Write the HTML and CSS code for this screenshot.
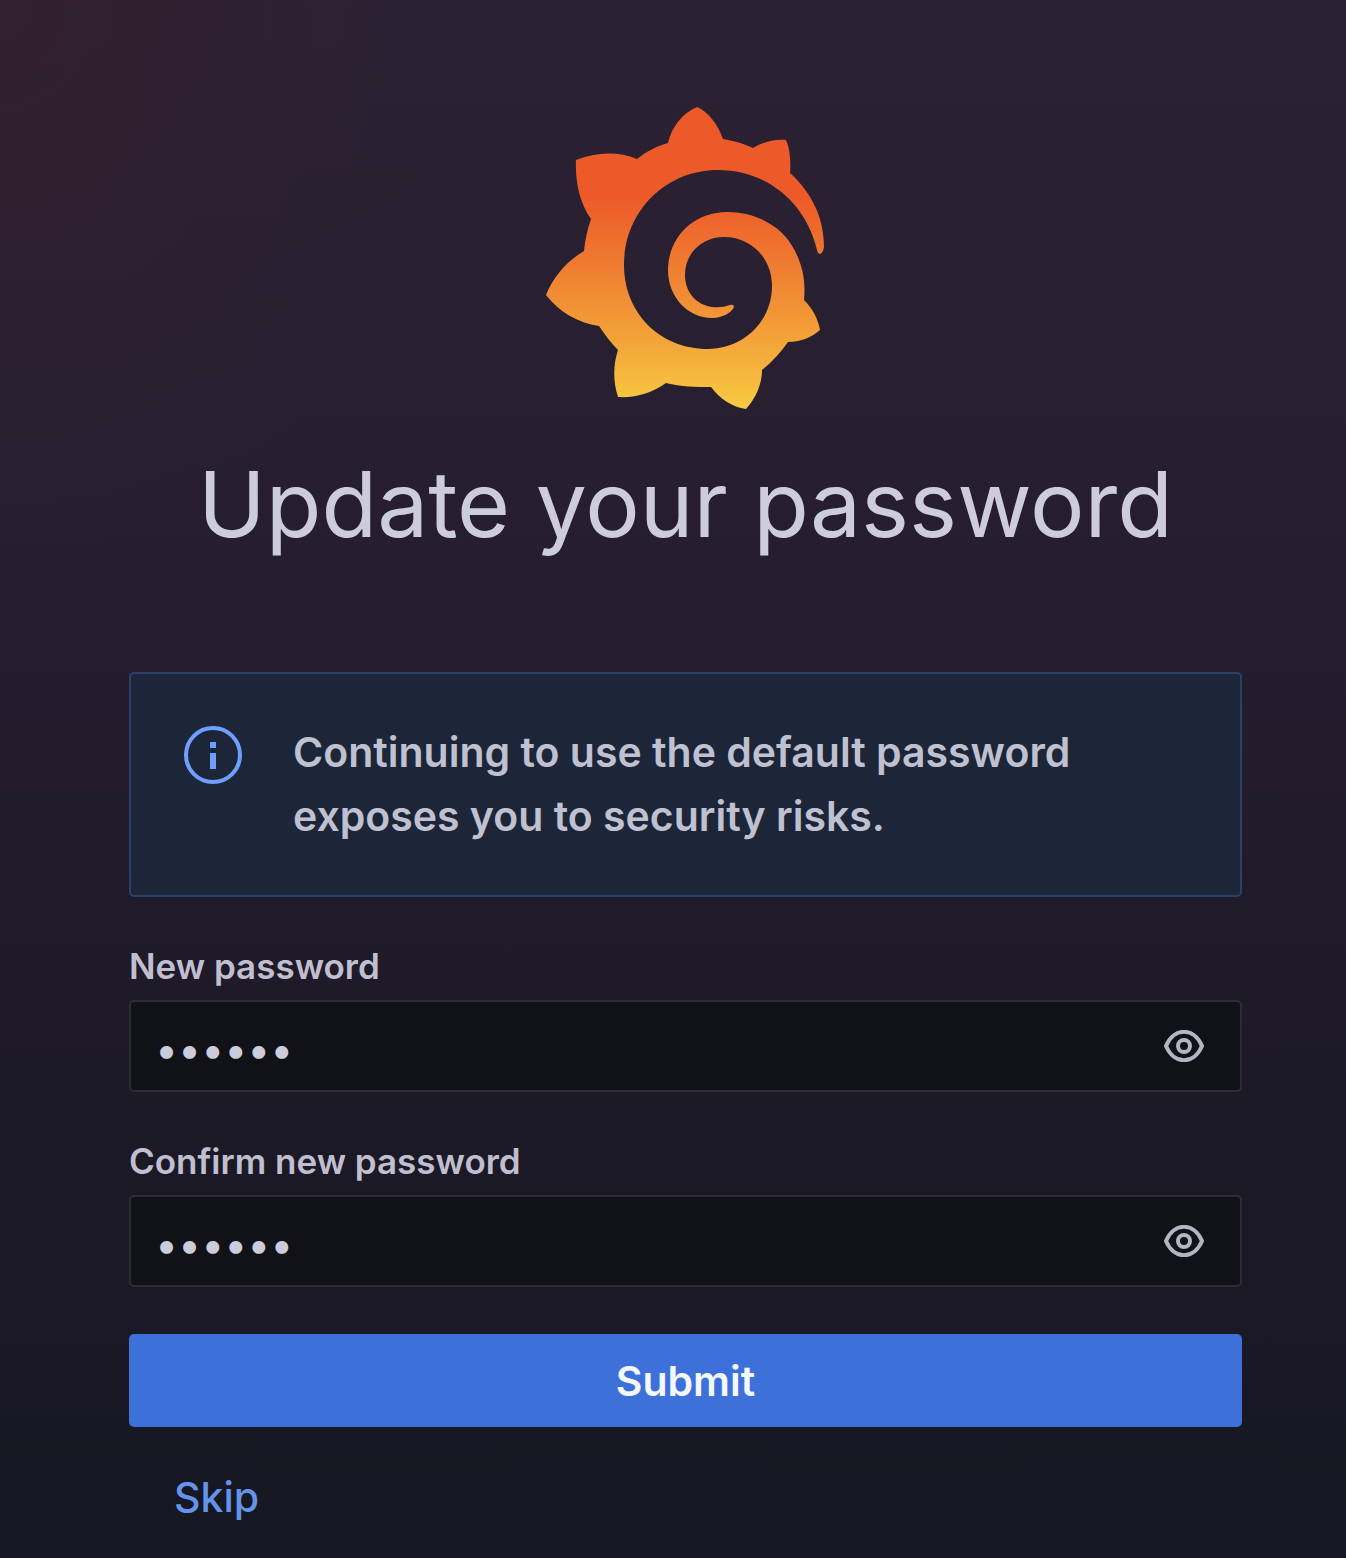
FILE: index.html
```html
<!DOCTYPE html>
<html lang="en">
<head>
<meta charset="utf-8">
<title>Update your password</title>
<link rel="stylesheet" href="styles.css">
</head>
<body>
<main class="login">
  <header class="login-header">
    <svg class="logo" viewBox="545 107 280 302" role="img" aria-label="Grafana">
      <defs>
        <linearGradient id="flame" gradientUnits="userSpaceOnUse" x1="0" y1="107" x2="0" y2="409">
          <stop offset="0" stop-color="#ed5a29"/>
          <stop offset="0.3" stop-color="#ed5a29"/>
          <stop offset="0.5" stop-color="#ef7830"/>
          <stop offset="0.75" stop-color="#f3a038"/>
          <stop offset="1" stop-color="#f8cb42"/>
        </linearGradient>
      </defs>
      <path fill="url(#flame)" d="M819 254 Q822 253 823 247 C823 218 811 193 789 173 C790 162 789 149 785 140 C773 139 762 142 752 148 C744 144 734 141 722 139 C717 125 708 112 696 107 C682 113 671 126 667 143 C656 146 646 151 636 159 C617 151 595 152 575 160 C574 183 579 203 590 219 C586 230 584 241 583 251 C566 261 552 277 545 295 C558 312 577 323 598 326 C604 335 610 343 617 350 C612 365 612 382 617 397 C635 398 651 393 665 383 C680 387 695 387 710 387 C719 399 731 407 745 409 C755 398 761 384 761 370 C771 362 780 352 787 342 C799 342 810 338 819 330 C817 318 811 308 803 300 C805 280 801 265 794 251 C782 226 755 212 726 212 C691 212 667 239 667 270 C667 297 687 318 711 318 C722 318 731 312 733 307 Q733 304 729 305 Q721 308 711 307 C696 305 684 293 684 275 C684 253 701 237 723 237 C751 237 771 259 771 286 C771 321 743 349 707 349 C658 349 623 312 623 265 C623 212 664 170 717 170 C766 170 805 203 816 250 Q817 254 819 254 Z"/>
    </svg>
    <h1 class="title">Update your password</h1>
  </header>

  <div class="alert" role="status">
    <svg class="alert-icon" viewBox="0 0 60 60" aria-hidden="true">
      <circle cx="30" cy="30" r="27" fill="none" stroke="currentColor" stroke-width="4"/>
      <path fill="currentColor" d="M27 17h6v6h-6zM27 28h6v16h-6z"/>
    </svg>
    <p class="alert-text">Continuing to use the default password exposes you to security risks.</p>
  </div>

  <form class="form">
    <div class="field">
      <label class="label" for="new-password">New password</label>
      <div class="input-box">
        <input class="input" id="new-password" type="password" value="secret">
        <button class="reveal" type="button" aria-label="Show password">
          <svg class="eye" viewBox="0 0 40 32" aria-hidden="true">
            <path d="M2 16C10 -3 30 -3 38 16C30 35 10 35 2 16Z"/>
            <circle cx="20" cy="16" r="6"/>
          </svg>
        </button>
      </div>
    </div>
    <div class="field">
      <label class="label" for="confirm-password">Confirm new password</label>
      <div class="input-box">
        <input class="input" id="confirm-password" type="password" value="secret">
        <button class="reveal" type="button" aria-label="Show password">
          <svg class="eye" viewBox="0 0 40 32" aria-hidden="true">
            <path d="M2 16C10 -3 30 -3 38 16C30 35 10 35 2 16Z"/>
            <circle cx="20" cy="16" r="6"/>
          </svg>
        </button>
      </div>
    </div>
    <button class="submit" type="submit">Submit</button>
    <a class="skip" href="#">Skip</a>
  </form>
</main>
</body>
</html>
```
FILE: styles.css
```css
* {
  box-sizing: border-box;
}

body {
  margin: 0;
  min-height: 100vh;
  background:
    radial-gradient(ellipse at top left, #31202f 0, transparent 25%),
    linear-gradient(#2b2133 0, #261e2f 35%, #1e1a28 65%, #161722 100%);
  color: #ccccdc;
  font-family: Inter, "Liberation Sans", sans-serif;
}

.login {
  padding: 107px 104px 24px 129px;
}

.login-header {
  display: flex;
  flex-direction: column;
  align-items: center;
}

.logo {
  width: 280px;
  height: 302px;
}

.title {
  margin: 35px 0 108px;
  font-size: 91px;
  font-weight: 400;
  line-height: 120px;
  white-space: nowrap;
}

.alert {
  display: flex;
  gap: 50px;
  padding: 46px 52px 47px;
  border: 2px solid #2a4068;
  border-radius: 5px;
  background: #1c2638;
}

.alert-icon {
  flex: none;
  width: 60px;
  height: 60px;
  margin-top: 5px;
  color: #6e9fff;
}

.alert-text {
  flex: 1;
  margin: 0;
  color: #c0c1d0;
  font-size: 41px;
  font-weight: 600;
  line-height: 64px;
}

.form {
  display: flex;
  flex-direction: column;
  margin-top: 47px;
}

.field {
  margin-bottom: 47px;
}

.label {
  display: block;
  margin-bottom: 12px;
  color: #c0bfcf;
  font-size: 35px;
  font-weight: 600;
  line-height: 44px;
}

.input-box {
  display: flex;
  align-items: center;
  height: 92px;
  padding: 0 36px 0 24px;
  border: 2px solid #2d2c36;
  border-radius: 5px;
  background: #111217;
}

.input {
  flex: 1;
  min-width: 0;
  padding: 6px 0 0;
  border: 0;
  outline: 0;
  background: transparent;
  color: inherit;
  font: 400 41px/60px Inter, sans-serif;
}

.reveal {
  display: flex;
  padding: 0;
  border: 0;
  background: transparent;
  color: #b4b4c2;
}

.eye {
  width: 40px;
  height: 32px;
  fill: none;
  stroke: currentColor;
  stroke-width: 4;
}

.submit {
  height: 93px;
  border: 0;
  border-radius: 5px;
  background: #3d71d9;
  color: #f4f8ff;
  font: 600 41px/60px Inter, sans-serif;
}

.skip {
  align-self: flex-start;
  margin: 40px 45px 0;
  color: #6493ea;
  font-size: 41px;
  font-weight: 500;
  line-height: 60px;
  text-decoration: none;
}
```
